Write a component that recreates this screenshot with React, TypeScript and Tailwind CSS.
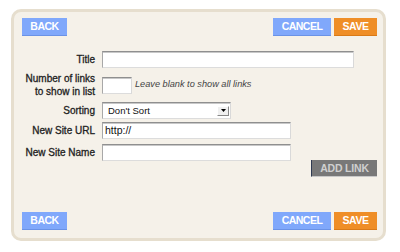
import React from "react";

const inputCls =
  "h-[17px] bg-white border border-t-[#8f8f8f] border-l-[#a8a8a8] border-r-[#d9d9d9] border-b-[#dcdcdc] shadow-[inset_0_1px_0_#c8c8c8]";

function Btn({ label, w, color }: { label: string; w: string; color: "blue" | "orange" }) {
  const c =
    color === "blue"
      ? "bg-[#80a8fb] border-b border-b-[#6a92e6]"
      : "bg-[#ef8e27] border-b border-b-[#d97a18]";
  return (
    <div
      className={`${w} ${c} h-[18px] flex items-center justify-center text-white font-bold text-[10.5px] tracking-[-0.5px] leading-none`}
    >
      {label}
    </div>
  );
}

function ButtonRow() {
  return (
    <div className="flex items-center justify-between">
      <Btn label="BACK" w="w-[45px]" color="blue" />
      <div className="flex gap-[3px]">
        <Btn label="CANCEL" w="w-[58px]" color="blue" />
        <Btn label="SAVE" w="w-[43px]" color="orange" />
      </div>
    </div>
  );
}

function Label({ children }: { children: React.ReactNode }) {
  return (
    <div className="w-[73px] mr-[7px] text-right text-[10px] leading-[13px] text-[#222] [-webkit-text-stroke:0.3px_#222] shrink-0">
      {children}
    </div>
  );
}

export default function App() {
  return (
    <div className="w-[400px] h-[252px] bg-white pt-[9px] pl-[11px] font-['Liberation_Sans',Arial,sans-serif]">
      <div className="w-[375px] h-[232px] border-[3px] border-[#e6dece] rounded-[10px] bg-[#f5f1e9] flex flex-col pl-[8px] pr-[6px] pt-[6px] pb-[8px]">
        <ButtonRow />

        <div className="flex flex-col">
          <div className="flex items-center mt-[15px]">
            <Label>Title</Label>
            <div className={`${inputCls} w-[252px]`} />
          </div>

          <div className="flex items-center mt-[4px]">
            <Label>
              Number of links
              <br />
              to show in list
            </Label>
            <div className={`${inputCls} w-[30px]`} />
            <span className="ml-[3px] italic text-[9.2px] text-[#444]">Leave blank to show all links</span>
          </div>

          <div className="flex items-center mt-[4px]">
            <Label>Sorting</Label>
            <div className={`${inputCls} w-[129px] flex items-center justify-between pl-[5px] pr-[1px]`}>
              <span className="text-[9.5px] text-[#111] leading-none">Don&apos;t Sort</span>
              <div className="w-[12px] h-[10px] bg-[#f0f0f0] border border-t-[#fff] border-l-[#fff] border-r-[#888] border-b-[#888] flex items-center justify-center">
                <svg width="5" height="3" viewBox="0 0 5 3">
                  <polygon points="0,0 5,0 2.5,3" fill="#000" />
                </svg>
              </div>
            </div>
          </div>

          <div className="flex items-center mt-[3px]">
            <Label>New Site URL</Label>
            <div className={`${inputCls} w-[189px] flex items-center pl-[2px]`}>
              <span className="text-[10.5px] text-[#111] leading-none">http://</span>
            </div>
          </div>

          <div className="flex items-center mt-[5px]">
            <Label>New Site Name</Label>
            <div className={`${inputCls} w-[189px]`} />
          </div>

          <div className="flex justify-end mt-[-1px]">
            <div className="w-[66px] h-[17px] bg-[#787878] border-l border-l-[#2f3a52] border-b border-b-[#c8c8c8] flex items-center justify-center text-[#cfcfcf] font-bold text-[10.5px] tracking-[-0.2px] leading-none">
              ADD LINK
            </div>
          </div>
        </div>

        <div className="flex-1" />
        <ButtonRow />
      </div>
    </div>
  );
}
